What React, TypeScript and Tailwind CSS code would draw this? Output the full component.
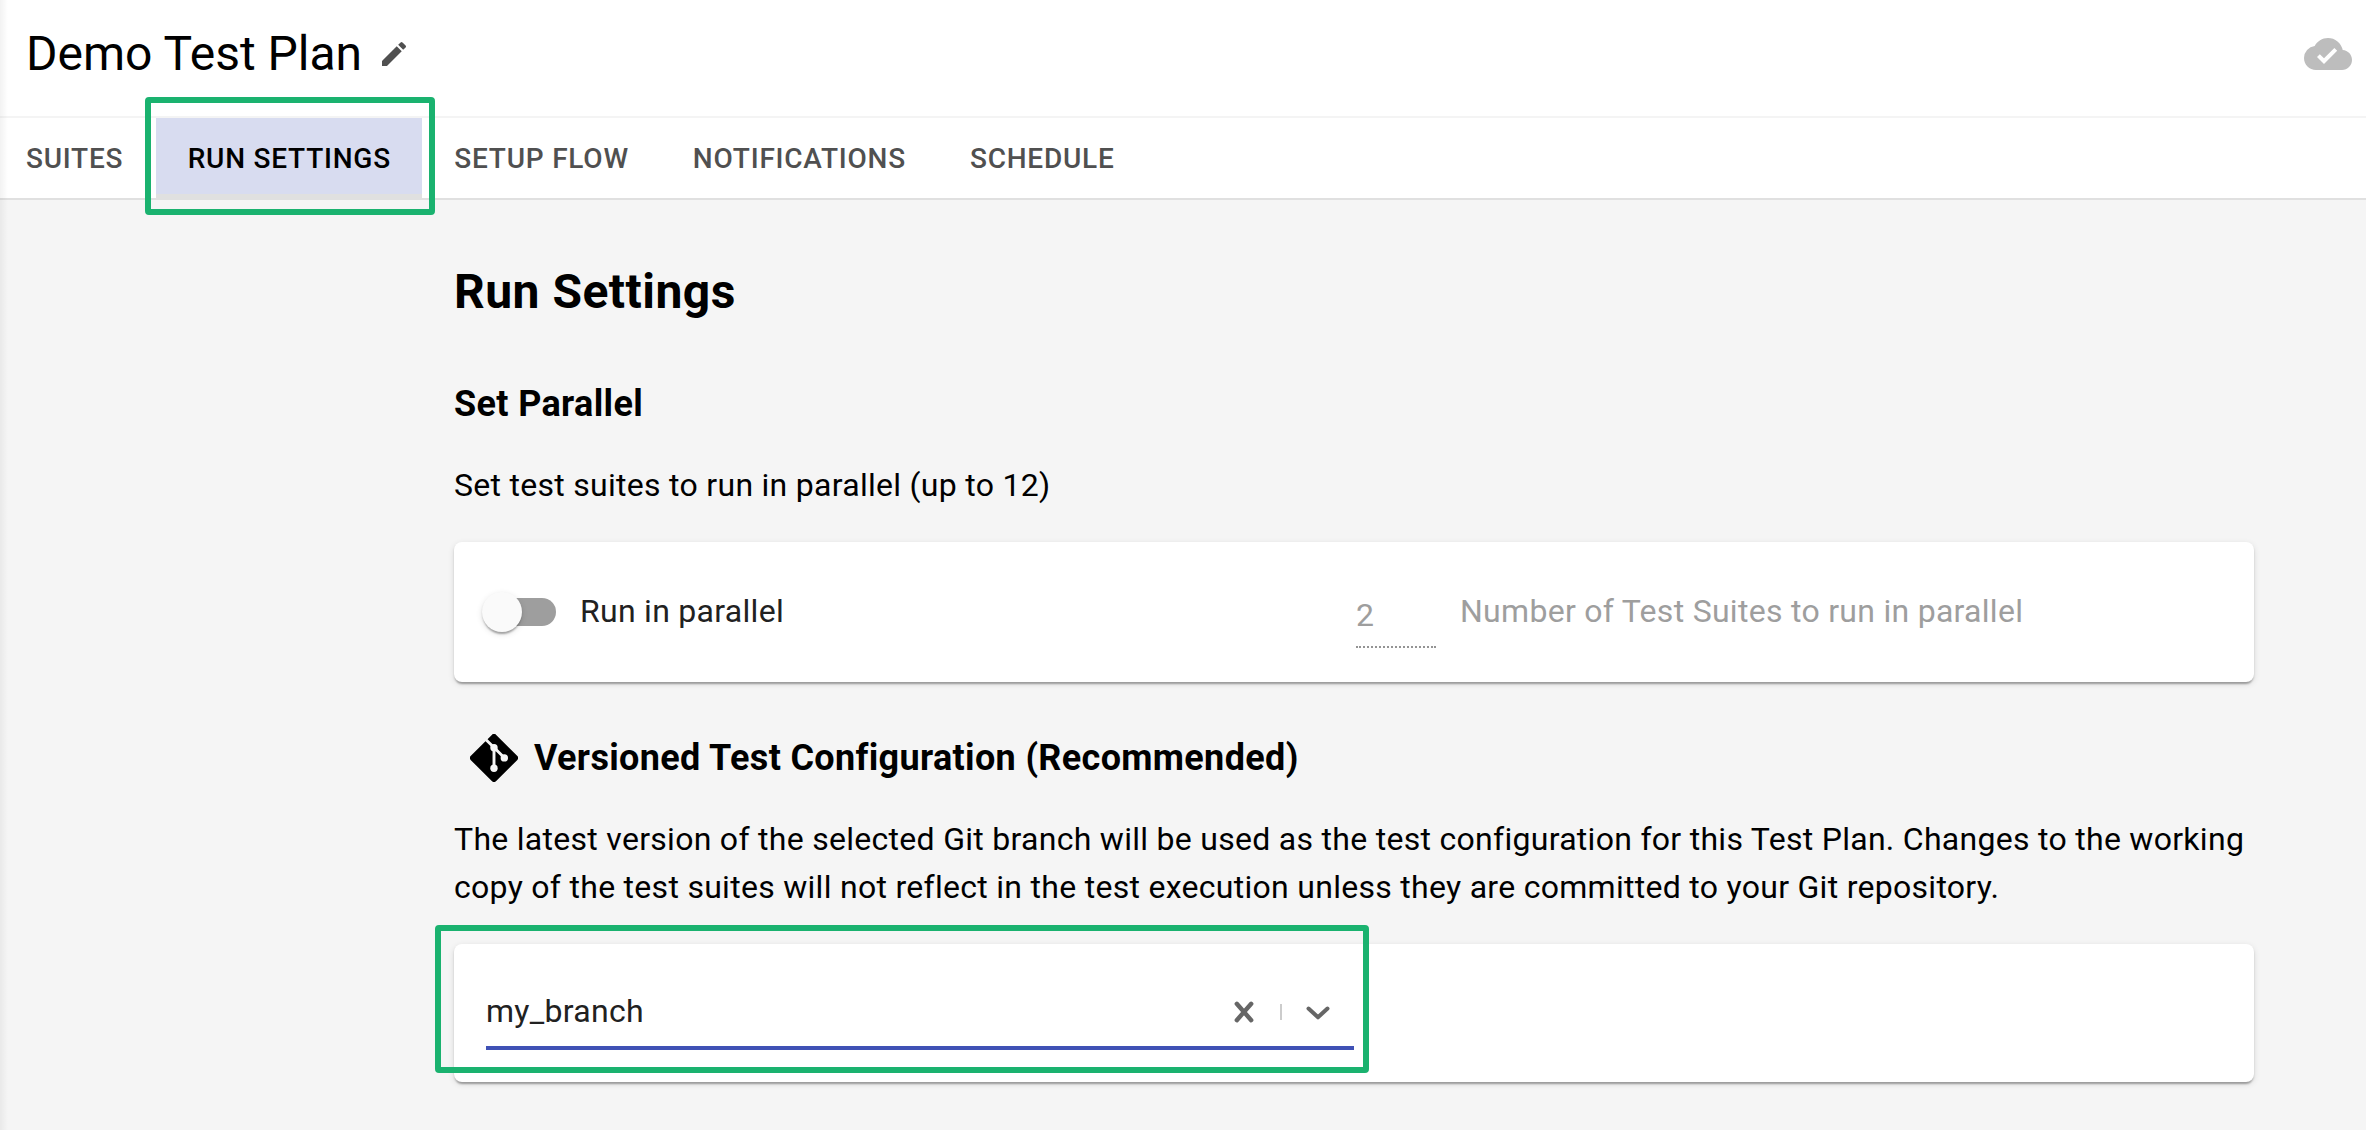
import { MdCloudDone, MdEdit } from "react-icons/md";
import type { ReactNode } from "react";

const tabs = ["Suites", "Run Settings", "Setup Flow", "Notifications", "Schedule"];

function Tab({ label, active }: { label: string; active: boolean }) {
  if (active) {
    return (
      <button className="relative ml-px h-20 w-[266px] border-b-4 border-[#e0e0e0] bg-[#d8dcf0] pt-[6px] text-black uppercase">
        {label}
        <span className="pointer-events-none absolute -top-[21px] -left-[11px] h-[118px] w-[290px] rounded-[4px] border-[6px] border-[#1ab26f]" />
      </button>
    );
  }
  return <button className="h-20 px-8 pt-[2px] text-[#505050] uppercase">{label}</button>;
}

function Card({ children, className }: { children: ReactNode; className: string }) {
  return (
    <div
      className={
        "relative flex rounded-lg bg-white shadow-[0_4px_2px_-2px_rgba(0,0,0,0.2),0_2px_2px_0_rgba(0,0,0,0.14),0_2px_6px_0_rgba(0,0,0,0.12)] " +
        className
      }
    >
      {children}
    </div>
  );
}

function GitIcon() {
  return (
    <svg viewBox="0 0 48 48" className="size-12">
      <path
        d="M21.800.900a3.100 3.100 0 0 1 4.400 0L47.100 21.800a3.100 3.100 0 0 1 0 4.400L26.200 47.100a3.100 3.100 0 0 1-4.400 0L.900 26.200a3.100 3.100 0 0 1 0-4.400z"
        fill="#000"
      />
      <path d="M15 4.800 24 13.500 34.300 23.700M24 13.500V34.300" fill="none" stroke="#f5f5f5" strokeWidth="2.900" />
      <g fill="#f5f5f5">
        <circle cx="24" cy="13.700" r="3.700" />
        <circle cx="34.300" cy="23.900" r="3.700" />
        <circle cx="24" cy="34.300" r="3.700" />
      </g>
    </svg>
  );
}

export default function App() {
  return (
    <div className="relative flex h-[1130px] w-[2366px] flex-col overflow-hidden bg-[#f5f5f5] font-[Roboto,sans-serif] text-[32px] leading-[48px] tracking-[0.285px] text-black">
      <header className="flex h-[118px] items-center justify-between border-b-2 border-[#f4f4f4] bg-white pr-[14px] pb-2 pl-[26px]">
        <div className="flex items-center gap-4">
          <h1 className="text-[48px] leading-none tracking-normal">Demo Test Plan</h1>
          <MdEdit className="size-8 text-[#505050]" />
        </div>
        <MdCloudDone className="size-12 text-[#bdbdbd]" />
      </header>

      <nav className="flex h-[82px] border-b-2 border-[#e0e0e0] bg-white text-[28px] font-medium tracking-[0.77px]">
        <div className="-ml-[6px] flex">
          {tabs.map((t) => (
            <Tab key={t} label={t} active={t === "Run Settings"} />
          ))}
        </div>
      </nav>

      <main className="ml-[454px] flex w-[1800px] flex-col pt-16">
        <h2 className="text-[48px] leading-[56px] font-bold tracking-[0.48px]">Run Settings</h2>
        <h3 className="mt-[60px] text-[36px] font-bold tracking-[0.35px]">Set Parallel</h3>
        <p className="mt-[33px]">Set test suites to run in parallel (up to 12)</p>

        <Card className="mt-[33px] h-[140px] items-center">
          <div className="flex w-[902px] items-center pl-7">
            <span className="flex h-10 w-[74px] items-center pl-[6px]">
              <span className="flex h-7 w-[68px] items-center rounded-full bg-[#9e9e9e]">
                <span className="-ml-[6px] size-10 shrink-0 rounded-full bg-[#fafafa] shadow-[0_4px_2px_-2px_rgba(0,0,0,0.2),0_2px_2px_0_rgba(0,0,0,0.14),0_2px_6px_0_rgba(0,0,0,0.12)]" />
              </span>
            </span>
            <span className="-mt-[2px] ml-6 text-[#212121]">Run in parallel</span>
          </div>
          <div className="mt-[6px] h-[66px] w-20 border-b-2 border-dotted border-[#949494] pt-[9px] text-[#9e9e9e]">2</div>
          <span className="-mt-[2px] ml-6 text-[#9e9e9e]">Number of Test Suites to run in parallel</span>
        </Card>

        <h3 className="mt-[52px] flex h-12 items-center gap-4 pl-4 text-[36px] font-bold tracking-[0.34px]">
          <GitIcon />
          Versioned Test Configuration (Recommended)
        </h3>
        <p className="mt-[33px]">
          The latest version of the selected Git branch will be used as the test configuration for this Test Plan. Changes to the working
          copy of the test suites will not reflect in the test execution unless they are committed to your Git repository.
        </p>

        <Card className="mt-[33px] h-[138px] pt-8 pl-8">
          <div className="flex h-[74px] w-[868px] items-center border-b-4 border-[#3f51b5] text-[#212121]">
            <span className="flex-1">my_branch</span>
            <svg viewBox="0 0 20 22" className="mt-[2px] h-[22px] w-5" fill="none" stroke="#666" strokeWidth="4.400" strokeLinecap="round">
              <path d="M2.800 2.800 17.200 19.200M17.200 2.800 2.800 19.200" />
            </svg>
            <span className="mt-[2px] ml-[26px] h-4 w-[2px] bg-[#ccc]" />
            <svg viewBox="0 0 24 16" className="mt-1 mr-6 ml-6 h-4 w-6" fill="none" stroke="#666" strokeWidth="4" strokeLinecap="round" strokeLinejoin="round">
              <path d="M2.500 3.500 12 12.300 21.500 3.500" />
            </svg>
          </div>
          <span className="pointer-events-none absolute -top-[19px] -left-[19px] h-[148px] w-[934px] rounded-[4px] border-[6px] border-[#1ab26f]" />
        </Card>
      </main>

      <div className="pointer-events-none absolute inset-y-0 left-0 w-2 bg-linear-to-r from-black/5 to-transparent" />
    </div>
  );
}
